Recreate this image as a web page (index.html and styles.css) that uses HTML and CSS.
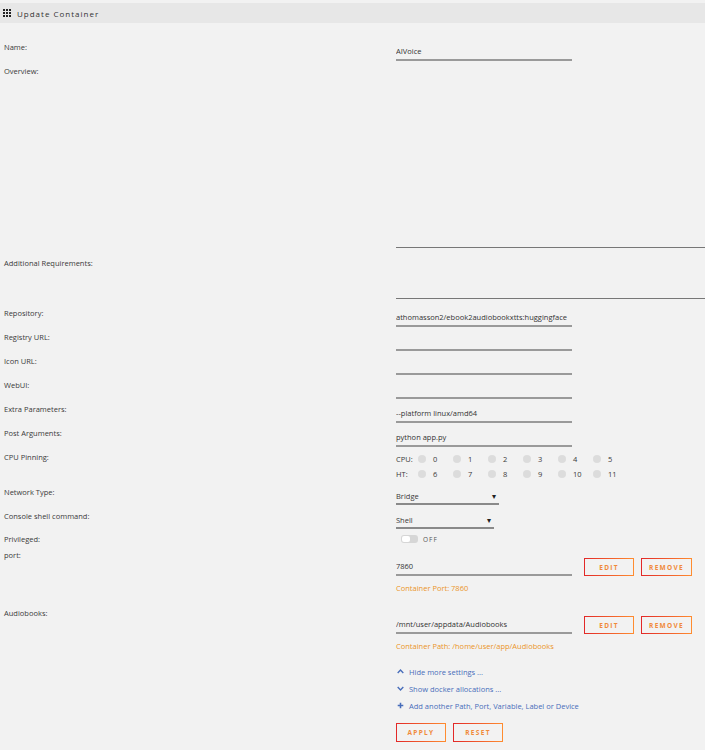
FILE: index.html
```html
<!DOCTYPE html>
<html lang="en">
<head>
    <meta charset="UTF-8">
    <title>Update Container</title>
    <link rel="stylesheet" href="styles.css">
</head>
<body>
    <div class="title-bar">
        <span class="grid-icon"><i></i><i></i><i></i><i></i><i></i><i></i><i></i><i></i><i></i></span>
        <span class="title">Update Container</span>
    </div>

    <form class="form">
        <div class="row">
            <div class="label">Name:</div>
            <div class="field"><input class="text-input" type="text" value="AIVoice"></div>
        </div>
        <div class="row row-overview">
            <div class="label">Overview:</div>
            <div class="field"><textarea class="area area-big"></textarea></div>
        </div>
        <div class="row row-extra">
            <div class="label">Additional Requirements:</div>
            <div class="field"><textarea class="area area-small"></textarea></div>
        </div>
        <div class="row">
            <div class="label">Repository:</div>
            <div class="field"><input class="text-input" type="text" value="athomasson2/ebook2audiobookxtts:huggingface"></div>
        </div>
        <div class="row">
            <div class="label">Registry URL:</div>
            <div class="field"><input class="text-input" type="text" value=""></div>
        </div>
        <div class="row">
            <div class="label">Icon URL:</div>
            <div class="field"><input class="text-input" type="text" value=""></div>
        </div>
        <div class="row">
            <div class="label">WebUI:</div>
            <div class="field"><input class="text-input" type="text" value=""></div>
        </div>
        <div class="row">
            <div class="label">Extra Parameters:</div>
            <div class="field"><input class="text-input" type="text" value="--platform linux/amd64"></div>
        </div>
        <div class="row">
            <div class="label">Post Arguments:</div>
            <div class="field"><input class="text-input" type="text" value="python app.py"></div>
        </div>
        <div class="row row-cpu">
            <div class="label">CPU Pinning:</div>
            <div class="field">
                <div class="cpu-line">
                    <span class="cpu-name">CPU:</span>
                    <span class="cpu"><i></i>0</span>
                    <span class="cpu"><i></i>1</span>
                    <span class="cpu"><i></i>2</span>
                    <span class="cpu"><i></i>3</span>
                    <span class="cpu"><i></i>4</span>
                    <span class="cpu"><i></i>5</span>
                </div>
                <div class="cpu-line">
                    <span class="cpu-name">HT:</span>
                    <span class="cpu"><i></i>6</span>
                    <span class="cpu"><i></i>7</span>
                    <span class="cpu"><i></i>8</span>
                    <span class="cpu"><i></i>9</span>
                    <span class="cpu"><i></i>10</span>
                    <span class="cpu"><i></i>11</span>
                </div>
            </div>
        </div>
        <div class="row">
            <div class="label">Network Type:</div>
            <div class="field"><div class="select select-net">Bridge</div></div>
        </div>
        <div class="row row-shell">
            <div class="label">Console shell command:</div>
            <div class="field"><div class="select select-shell">Shell</div></div>
        </div>
        <div class="row row-priv">
            <div class="label">Privileged:</div>
            <div class="field">
                <div class="toggle"><span class="track"><span class="knob"></span></span><span class="toggle-text">OFF</span></div>
            </div>
        </div>
        <div class="row row-config">
            <div class="label">port:</div>
            <div class="field">
                <div class="config-line">
                    <input class="text-input" type="text" value="7860">
                    <button type="button" class="btn btn-edit">EDIT</button>
                    <button type="button" class="btn btn-remove">REMOVE</button>
                </div>
                <div class="config-note">Container Port: 7860</div>
            </div>
        </div>
        <div class="row row-config">
            <div class="label">Audiobooks:</div>
            <div class="field">
                <div class="config-line">
                    <input class="text-input" type="text" value="/mnt/user/appdata/Audiobooks">
                    <button type="button" class="btn btn-edit">EDIT</button>
                    <button type="button" class="btn btn-remove">REMOVE</button>
                </div>
                <div class="config-note">Container Path: /home/user/app/Audiobooks</div>
            </div>
        </div>

        <div class="links">
            <a class="link" href="#">
                <svg viewBox="0 0 10 10" width="7" height="7"><path d="M1 7 L5 3 L9 7" fill="none" stroke="#486dba" stroke-width="2"/></svg>
                Hide more settings ...
            </a>
            <a class="link" href="#">
                <svg viewBox="0 0 10 10" width="7" height="7"><path d="M1 3 L5 7 L9 3" fill="none" stroke="#486dba" stroke-width="2"/></svg>
                Show docker allocations ...
            </a>
            <a class="link" href="#">
                <svg viewBox="0 0 10 10" width="7" height="7"><path d="M5 1 V9 M1 5 H9" fill="none" stroke="#486dba" stroke-width="2.2"/></svg>
                Add another Path, Port, Variable, Label or Device
            </a>
        </div>

        <div class="actions">
            <button type="button" class="btn btn-main">APPLY</button>
            <button type="button" class="btn btn-main">RESET</button>
        </div>
    </form>
</body>
</html>
```

FILE: styles.css
```css
body {
    margin: 0;
    background-color: #f2f2f2;
    font-family: "Open Sans", "Noto Sans", sans-serif;
    font-size: 7.5px;
    color: #3a3a3a;
    overflow: hidden;
}

.title-bar {
    margin-top: 3px;
    height: 20px;
    background-color: #e7e7e7;
    display: flex;
    align-items: center;
    padding-left: 3px;
}

.grid-icon {
    display: grid;
    grid-template-columns: repeat(3, 2px);
    grid-auto-rows: 2px;
    gap: 1px;
    margin-right: 6px;
}

.grid-icon i {
    background-color: #222;
}

.title {
    font-size: 8px;
    letter-spacing: 1px;
    color: #333;
}

.form {
    margin-top: 18px;
}

.row {
    display: flex;
    height: 24px;
}

.label {
    width: 392px;
    padding-left: 4px;
    line-height: 12px;
    flex: none;
}

.field {
    flex: 1;
    min-width: 0;
}

.text-input {
    display: block;
    width: 176px;
    height: 20px;
    box-sizing: border-box;
    padding: 3px 0 2px;
    margin: 0;
    border: none;
    border-bottom: 2px solid #9a9a9a;
    background: transparent;
    font-family: inherit;
    font-size: 7.5px;
    color: #333;
    outline: none;
}

.area {
    display: block;
    width: 100%;
    box-sizing: border-box;
    margin: 0;
    padding: 0;
    border: none;
    border-bottom: 1px solid #777;
    background: transparent;
    resize: none;
    font-family: inherit;
}

.row-overview {
    height: 192px;
}

.area-big {
    height: 183px;
}

.row-extra {
    height: 50px;
}

.area-small {
    height: 42px;
}

/* cpu pinning */
.row-cpu {
    height: 35px;
}

.cpu-line {
    display: flex;
    align-items: center;
    height: 14px;
    margin-top: 1px;
}

.cpu-name {
    width: 22px;
}

.cpu {
    width: 35px;
    display: flex;
    align-items: center;
}

.cpu i {
    width: 8px;
    height: 8px;
    border-radius: 50%;
    background-color: #dcdcdc;
    margin-right: 7px;
}

/* selects */
.select {
    position: relative;
    box-sizing: border-box;
    height: 19px;
    padding-top: 4px;
    line-height: 12px;
    border-bottom: 2px solid #8a8a8a;
}

.select::after {
    content: "\25BE";
    position: absolute;
    right: 3px;
    top: 4px;
    font-size: 8px;
    color: #222;
}

.select-net {
    width: 103px;
}

.select-shell {
    width: 98px;
}

.row-shell {
    height: 23px;
}

/* toggle */
.row-priv {
    height: 16px;
}

.toggle {
    display: flex;
    align-items: center;
    height: 12px;
    margin-left: 5px;
}

.track {
    width: 17px;
    height: 8px;
    border-radius: 3px;
    background-color: #d6d6d6;
    display: flex;
    align-items: center;
    padding-left: 1px;
    box-sizing: border-box;
}

.knob {
    width: 8px;
    height: 6px;
    border-radius: 2px;
    background-color: #fff;
}

.toggle-text {
    margin-left: 5px;
    font-size: 6.5px;
    letter-spacing: 1px;
    color: #555;
}

/* ports and paths */
.row-config {
    height: 58px;
}

.config-line {
    display: flex;
    align-items: flex-end;
    margin-top: 8px;
}

.config-line .text-input {
    height: 19px;
}

.btn {
    height: 18px;
    box-sizing: border-box;
    padding: 0;
    background: transparent;
    border: 1px solid;
    border-image: linear-gradient(90deg, #e22828, #ff8d30) 1;
    font-family: inherit;
    font-size: 6.5px;
    font-weight: bold;
    letter-spacing: 1.3px;
    color: #f08a3a;
}

.btn-edit {
    width: 50px;
    margin-left: 12px;
}

.btn-remove {
    width: 51px;
    margin-left: 7px;
}

.config-note {
    margin-top: 6px;
    line-height: 12px;
    color: #eb9528;
}

/* bottom links */
.links {
    margin-left: 396px;
    margin-top: -2px;
}

.link {
    display: flex;
    align-items: center;
    height: 17px;
    color: #486dba;
    text-decoration: none;
}

.link svg {
    margin: 0 5px 0 1px;
}

.actions {
    margin: 9px 0 0 396px;
    display: flex;
    gap: 7px;
}

.btn-main {
    width: 50px;
    height: 19px;
}
```
